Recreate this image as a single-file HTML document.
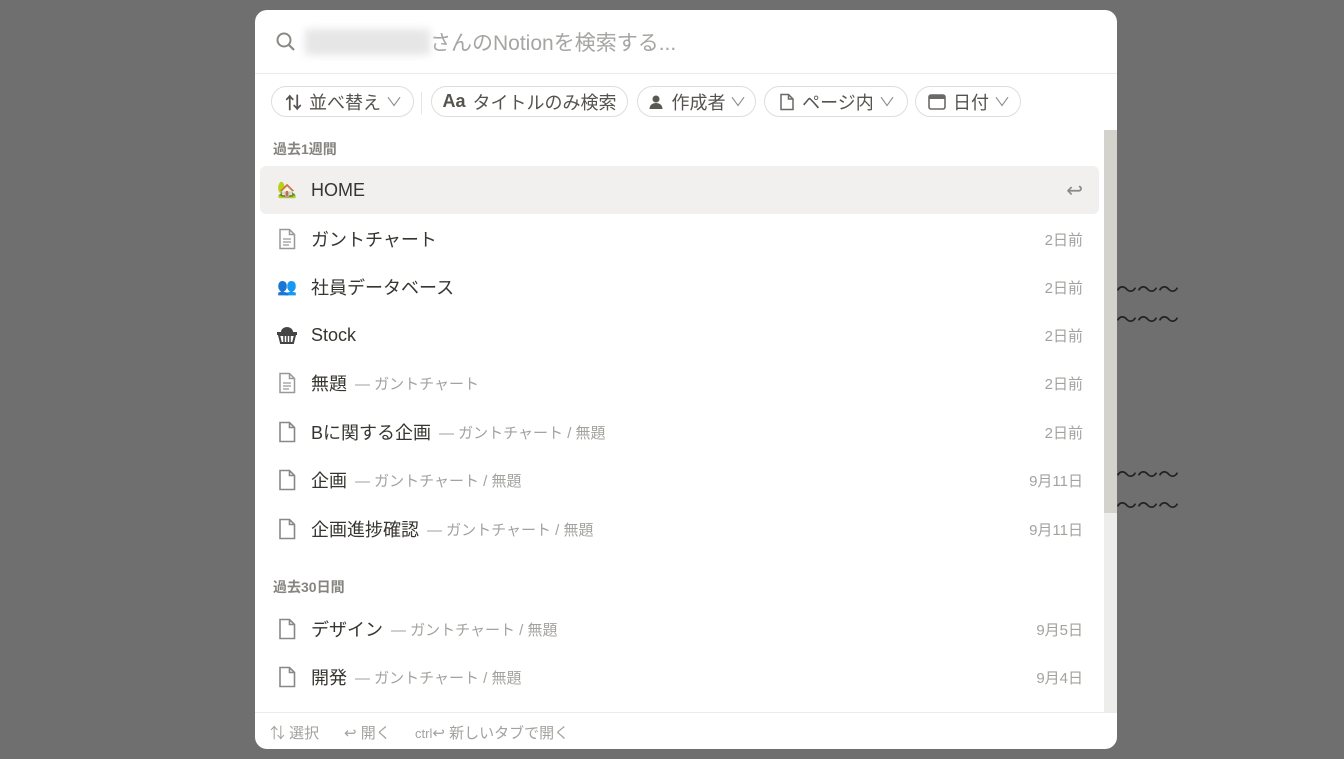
<!DOCTYPE html>
<html><head><meta charset="utf-8"><style>
*{box-sizing:border-box;margin:0;padding:0}
body{width:1344px;height:759px;background:#6f6f6f;font-family:"Liberation Sans","Noto Sans CJK JP",sans-serif;position:relative;overflow:hidden}
.wave{position:absolute;left:1116px;font-size:21px;color:#222;font-family:"Noto Sans CJK JP",sans-serif;line-height:1}
.modal{position:absolute;left:255px;top:10px;width:862px;height:739px;background:#fff;border-radius:12px;overflow:hidden}
.search{height:64px;border-bottom:1px solid #ebebea;display:flex;align-items:center;padding-left:20px}
.blur{width:125px;height:26px;background:#e6e6e6;filter:blur(4px);margin-left:8px}
.ph{font-size:21px;color:#a5a5a3}
.chip{position:absolute;top:76px;height:31px;border:1px solid #dedddb;border-radius:16px;display:flex;align-items:center;justify-content:center;font-size:18px;color:#55534e;gap:7px}
.chev{font-size:12px;color:#888;transform:scaleX(1.4)}
.sep{position:absolute;left:166px;top:82px;width:1px;height:22px;background:#e5e5e5}
.sec{position:absolute;left:18px;font-size:14px;color:#86847f;font-weight:bold}
.row{position:absolute;left:5px;width:839px;height:48px;display:flex;align-items:center;padding-left:16px;font-size:18px;color:#37352f}
.row.hl{background:#f1f0ee;border-radius:6px}
.ic{width:22px;height:22px;margin-right:13px;display:flex;align-items:center;justify-content:center}
.path{color:#a3a29e;font-size:15px;margin-left:8px}
.date{position:absolute;right:16px;font-size:15px;color:#a3a29e}
.sb{position:absolute;left:849px;top:120px;width:13px;height:582px;background:#ededeb}
.sb i{display:block;height:383px;background:#d4d2cc}
.foot{position:absolute;top:702px;left:0;right:0;height:37px;border-top:1px solid #ebebea;font-size:15px;color:#a3a29e}
.foot span{position:absolute;top:9px}
</style></head><body>
<div class="wave" style="top:279px">〜〜〜</div>
<div class="wave" style="top:309px">〜〜〜</div>
<div class="wave" style="top:464px">〜〜〜</div>
<div class="wave" style="top:495px">〜〜〜</div>
<div class="modal">
<div class="search"><svg width="22" height="22" viewBox="0 0 22 22"><circle cx="9" cy="9" r="6.5" fill="none" stroke="#8a8985" stroke-width="2"/><line x1="14" y1="14" x2="19" y2="19" stroke="#8a8985" stroke-width="2.2"/></svg><div class="blur"></div><span class="ph">さんのNotionを検索する...</span></div>
<div class="chip" style="left:16px;width:143px"><b style="font-size:17px">⇅</b>並べ替え<span class="chev">∨</span></div><div class="sep"></div>
<div class="chip" style="left:176px;width:197px"><b>Aa</b>タイトルのみ検索</div>
<div class="chip" style="left:382px;width:119px"><svg width="16" height="16" viewBox="0 0 16 16"><circle cx="8" cy="5" r="3.5" fill="#5a5955"/><path d="M1.5 15c0-4 3-6 6.5-6s6.5 2 6.5 6z" fill="#5a5955"/></svg>作成者<span class="chev">∨</span></div>
<div class="chip" style="left:509px;width:144px"><svg width="16" height="18" viewBox="0 0 16 18"><path d="M2 1.5h7.5l4.5 4.5v10.5H2z M9.5 1.5V6H14" fill="none" stroke="#6a6965" stroke-width="1.5"/></svg>ページ内<span class="chev">∨</span></div>
<div class="chip" style="left:660px;width:106px"><svg width="18" height="16" viewBox="0 0 18 16"><rect x="1" y="1" width="16" height="14" rx="2" fill="none" stroke="#6a6965" stroke-width="1.6"/><rect x="1" y="1" width="16" height="4" fill="#6a6965"/></svg>日付<span class="chev">∨</span></div>
<div class="sec" style="top:129px">過去1週間</div>
<div class="row hl" style="top:156px"><div class="ic" style="font-size:16px">🏡</div>HOME<span class="date" style="font-size:20px;color:#888">↩</span></div>
<div class="row" style="top:205px"><div class="ic"><svg width="18" height="22" viewBox="0 0 18 22"><path d="M2 1.5h9.5l5 5v14H2z M11.5 1.5v5h5" fill="none" stroke="#999" stroke-width="1.5"/><path d="M5 11h8M5 14h8M5 17h6" stroke="#999" stroke-width="1.2"/></svg></div>ガントチャート<span class="date">2日前</span></div>
<div class="row" style="top:253px"><div class="ic" style="font-size:16px">👥</div>社員データベース<span class="date">2日前</span></div>
<div class="row" style="top:301px"><div class="ic"><svg width="22" height="18" viewBox="0 0 22 18"><path d="M5 6a6 5 0 0 1 12 0z" fill="#444"/><rect x="1" y="6" width="20" height="3" fill="#444"/><path d="M3 9h16l-2 8H5z" fill="none" stroke="#444" stroke-width="2"/><path d="M8 10v6M11 10v6M14 10v6" stroke="#444" stroke-width="1.5"/></svg></div>Stock<span class="date">2日前</span></div>
<div class="row" style="top:349px"><div class="ic"><svg width="18" height="22" viewBox="0 0 18 22"><path d="M2 1.5h9.5l5 5v14H2z M11.5 1.5v5h5" fill="none" stroke="#999" stroke-width="1.5"/><path d="M5 11h8M5 14h8M5 17h6" stroke="#999" stroke-width="1.2"/></svg></div>無題<span class="path">— ガントチャート</span><span class="date">2日前</span></div>
<div class="row" style="top:398px"><div class="ic"><svg width="18" height="22" viewBox="0 0 18 22"><path d="M2 1.5h9.5l5 5v14H2z M11.5 1.5v5h5" fill="none" stroke="#888" stroke-width="1.6"/></svg></div>Bに関する企画<span class="path">— ガントチャート / 無題</span><span class="date">2日前</span></div>
<div class="row" style="top:446px"><div class="ic"><svg width="18" height="22" viewBox="0 0 18 22"><path d="M2 1.5h9.5l5 5v14H2z M11.5 1.5v5h5" fill="none" stroke="#888" stroke-width="1.6"/></svg></div>企画<span class="path">— ガントチャート / 無題</span><span class="date">9月11日</span></div>
<div class="row" style="top:495px"><div class="ic"><svg width="18" height="22" viewBox="0 0 18 22"><path d="M2 1.5h9.5l5 5v14H2z M11.5 1.5v5h5" fill="none" stroke="#888" stroke-width="1.6"/></svg></div>企画進捗確認<span class="path">— ガントチャート / 無題</span><span class="date">9月11日</span></div>
<div class="sec" style="top:567px">過去30日間</div>
<div class="row" style="top:595px"><div class="ic"><svg width="18" height="22" viewBox="0 0 18 22"><path d="M2 1.5h9.5l5 5v14H2z M11.5 1.5v5h5" fill="none" stroke="#888" stroke-width="1.6"/></svg></div>デザイン<span class="path">— ガントチャート / 無題</span><span class="date">9月5日</span></div>
<div class="row" style="top:643px"><div class="ic"><svg width="18" height="22" viewBox="0 0 18 22"><path d="M2 1.5h9.5l5 5v14H2z M11.5 1.5v5h5" fill="none" stroke="#888" stroke-width="1.6"/></svg></div>開発<span class="path">— ガントチャート / 無題</span><span class="date">9月4日</span></div>
<div class="sb"><i></i></div>
<div class="foot"><span style="left:15px">⇅ 選択</span><span style="left:89px">↩ 開く</span><span style="left:160px"><small style="font-size:13px">ctrl</small>↩ 新しいタブで開く</span></div>
</div>
</body></html>
